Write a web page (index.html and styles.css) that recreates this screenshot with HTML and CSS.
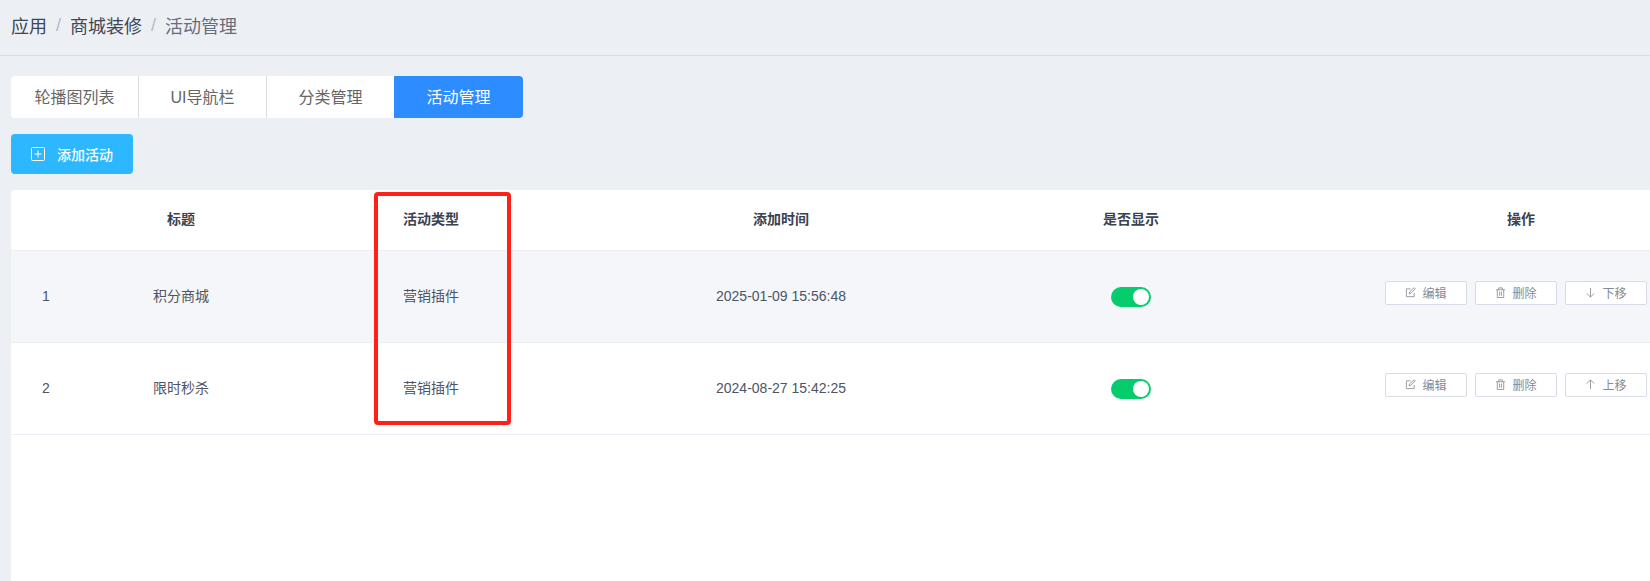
FILE: index.html
```html
<!DOCTYPE html>
<html lang="zh-CN">
<head>
<meta charset="utf-8">
<title>活动管理</title>
<link rel="stylesheet" href="styles.css">
</head>
<body>
<div class="page">
  <nav class="crumbs">
    <span class="crumb strong">应用</span><span class="sep">/</span>
    <span class="crumb strong">商城装修</span><span class="sep">/</span>
    <span class="crumb">活动管理</span>
  </nav>
  <main class="content">
    <div class="tabs">
      <div class="tab">轮播图列表</div>
      <div class="tab">UI导航栏</div>
      <div class="tab">分类管理</div>
      <div class="tab active">活动管理</div>
    </div>
    <button class="add">
      <svg class="add-icon" viewBox="0 0 14 14" width="14" height="14"><rect x=".5" y=".5" width="13" height="13" rx="1" fill="none" stroke="#fff"/><path d="M7 3.500v7M3.500 7h7" stroke="#fff" fill="none"/></svg>
      <span>添加活动</span>
    </button>
    <section class="table">
      <div class="row head">
        <div class="cell"></div><div class="cell">标题</div><div class="cell">活动类型</div><div class="cell">添加时间</div><div class="cell">是否显示</div><div class="cell">操作</div>
      </div>
      <div class="row body shade">
        <div class="cell num">1</div><div class="cell txt">积分商城</div><div class="cell txt">营销插件</div><div class="cell num">2025-01-09 15:56:48</div>
        <div class="cell"><span class="switch"><i class="knob"></i></span></div>
        <div class="cell ops">
          <button class="op"><svg class="ico" viewBox="0 0 12 12"><path d="M10 6.500V10.500H1.500V2H6M4.500 7.500L5 5.200 10 .8l1.200 1.200L6.500 6.800z"/></svg>编辑</button>
          <button class="op"><svg class="ico" viewBox="0 0 12 12"><path d="M1 3h10M4 3V1h4v2M2.500 3v8.500h7V3M5 5v4.500M7 5v4.500"/></svg>删除</button>
          <button class="op"><svg class="ico" viewBox="0 0 12 12"><path d="M6 1v10M2 7l4 4 4-4"/></svg>下移</button>
        </div>
      </div>
      <div class="row body">
        <div class="cell num">2</div><div class="cell txt">限时秒杀</div><div class="cell txt">营销插件</div><div class="cell num">2024-08-27 15:42:25</div>
        <div class="cell"><span class="switch"><i class="knob"></i></span></div>
        <div class="cell ops">
          <button class="op"><svg class="ico" viewBox="0 0 12 12"><path d="M10 6.500V10.500H1.500V2H6M4.500 7.500L5 5.200 10 .8l1.200 1.200L6.500 6.800z"/></svg>编辑</button>
          <button class="op"><svg class="ico" viewBox="0 0 12 12"><path d="M1 3h10M4 3V1h4v2M2.500 3v8.500h7V3M5 5v4.500M7 5v4.500"/></svg>删除</button>
          <button class="op"><svg class="ico" viewBox="0 0 12 12"><path d="M6 11V1M2 5l4-4 4 4"/></svg>上移</button>
        </div>
      </div>
    </section>
  </main>
  <div class="mark"></div>
</div>
</body>
</html>
```
FILE: styles.css
```css
* { box-sizing: border-box; }
html, body { margin: 0; height: 100%; }
body {
  background: #ecf0f5;
  font-family: "Liberation Sans", "Noto Sans CJK SC", sans-serif;
  color: #4d5564;
  overflow: hidden;
}
.page { position: relative; width: 1650px; height: 581px; display: flex; flex-direction: column; overflow: hidden; }
.crumbs {
  height: 56px; flex: none; padding: 0 0 5px 11px; display: flex; align-items: center;
  font-size: 18px; border-bottom: 1px solid #d8dbe4; color: #666d7c;
}
.crumb.strong { color: #3f4654; }
.sep { color: #b5bac8; margin: 0 9px; }
.content { flex: 1; padding: 20px 0 0 11px; display: flex; flex-direction: column; min-height: 0; }
.tabs { display: flex; height: 42px; width: 512px; background: #fff; border-radius: 4px; overflow: hidden; flex: none; }
.tab { width: 128px; padding-bottom: 2px; display: flex; align-items: center; justify-content: center; font-size: 16px; color: #666; border-right: 1px solid #d8dce8; }
.tab:nth-child(3) { width: 127px; border-right: 0; }
.tab:last-child { width: 129px; border-right: 0; background: #2d8cff; color: #fff; }
.add {
  width: 122px; height: 40px; margin-top: 16px; flex: none; border: 0; border-radius: 4px;
  background: #2db7ff; color: #fff; font: inherit; font-size: 14px; font-weight: 500;
  display: flex; align-items: center; padding: 0 0 0 20px; gap: 12px;
}
.add-icon { flex: none; }
.table { margin-top: 16px; flex: 1; min-height: 0; background: #fff; border-radius: 4px 0 0 0; overflow: hidden; }
.row { display: grid; grid-template-columns: 70px 200px 300px 400px 300px 480px; width: 1750px; border-bottom: 1px solid #eceef5; }
.head { height: 61px; font-weight: 700; color: #3b4250; }
.head .cell { padding-bottom: 4px; }
.body { height: 92px; }
.shade { background: #f5f6fa; }
.cell { display: flex; align-items: center; justify-content: center; font-size: 14px; }
.num { padding-bottom: 1px; }
.txt { padding-bottom: 3px; }
.switch { width: 40px; height: 20px; background: #05cc6c; border-radius: 10px; display: flex; align-items: center; justify-content: flex-end; padding-right: 2px; }
.knob { width: 16px; height: 16px; background: #fff; border-radius: 50%; }
.ops { gap: 8px; padding: 0 10px 8px 0; }
.op {
  width: 82px; height: 24px; background: #fff; border: 1px solid #d8dbe8; border-radius: 2px;
  font: inherit; font-size: 12px; color: #848a96; display: flex; align-items: center; justify-content: center; gap: 6px; padding: 0 0 1px;
}
.ico { width: 11px; height: 11px; flex: none; fill: none; stroke: #8f95a1; stroke-width: 1; }
.mark { position: absolute; left: 374px; top: 192px; width: 137px; height: 233px; border: 4px solid #ff2018; border-radius: 4px; }
```
